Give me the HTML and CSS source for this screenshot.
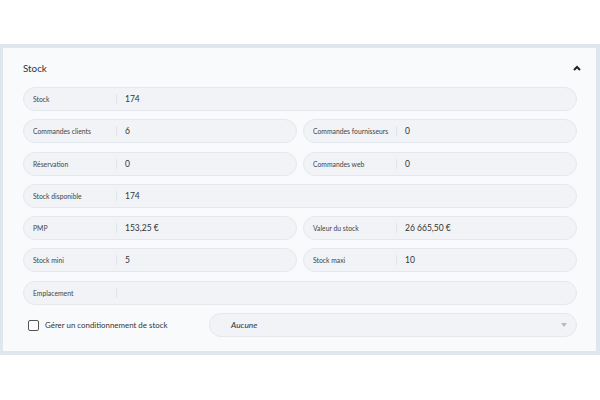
FILE: index.html
```html
<!DOCTYPE html>
<html lang="fr">
<head>
  <meta charset="UTF-8">
  <meta name="viewport" content="width=device-width, initial-scale=1">
  <title>Stock</title>
  <link rel="stylesheet" href="styles.css">
</head>
<body>
  <div class="frame">
    <div class="card">
      <div class="card-header">
        <span class="card-title">Stock</span>
        <svg class="chevron" width="8" height="6" viewBox="0 0 8 6">
          <polyline points="1,5 4,2 7,5" fill="none" stroke="#222" stroke-width="2"/>
        </svg>
      </div>

      <div class="fields">
        <div class="field full"><span class="label">Stock</span><span class="value">174</span></div>

        <div class="field"><span class="label">Commandes clients</span><span class="value">6</span></div>
        <div class="field"><span class="label">Commandes fournisseurs</span><span class="value">0</span></div>

        <div class="field"><span class="label">Réservation</span><span class="value">0</span></div>
        <div class="field"><span class="label">Commandes web</span><span class="value">0</span></div>

        <div class="field full"><span class="label">Stock disponible</span><span class="value">174</span></div>

        <div class="field"><span class="label">PMP</span><span class="value">153,25 €</span></div>
        <div class="field"><span class="label">Valeur du stock</span><span class="value">26 665,50 €</span></div>

        <div class="field"><span class="label">Stock mini</span><span class="value">5</span></div>
        <div class="field"><span class="label">Stock maxi</span><span class="value">10</span></div>

        <div class="field full"><span class="label">Emplacement</span><span class="value"></span></div>

        <div class="options full">
          <label class="check">
            <span class="box"></span>
            Gérer un conditionnement de stock
          </label>
          <div class="select">
            <span>Aucune</span>
            <svg width="6" height="4" viewBox="0 0 6 4"><polygon points="0,0 6,0 3,4" fill="#b4b9c2"/></svg>
          </div>
        </div>
      </div>
    </div>
  </div>
</body>
</html>
```

FILE: styles.css
```css
body {
  margin: 0;
  padding-top: 44px;
  font-family: Lato, "Noto Sans", sans-serif;
  background: #fff;
  color: #333;
}

.frame {
  background: #dfe6ee;
  padding: 4px 4px 4px 3px;
}

.card {
  background: #f9fafc;
  padding: 0 19px 14px 20px;
}

.card-header {
  height: 39px;
  display: flex;
  align-items: center;
  justify-content: space-between;
}

.card-title {
  font-size: 9.8px;
  color: #333;
}

.chevron {
  margin-right: -4px;
}

.fields {
  display: grid;
  grid-template-columns: 1fr 1fr;
  column-gap: 6px;
  row-gap: 8.3px;
}

.full {
  grid-column: 1 / 3;
}

.field {
  height: 24px;
  display: flex;
  align-items: center;
  background: #f1f3f6;
  border: 1px solid #e4e8ed;
  border-radius: 13px;
  box-sizing: border-box;
}

.label {
  width: 83px;
  padding-left: 9px;
  font-size: 6.8px;
  color: #444;
  white-space: nowrap;
  border-right: 1px solid #e0e3e8;
  line-height: 10px;
}

.value {
  padding-left: 8px;
  font-size: 8.5px;
  color: #333;
}

.options {
  height: 24px;
  display: flex;
  align-items: center;
}

.check {
  width: 186px;
  display: flex;
  align-items: center;
  font-size: 7.9px;
  color: #333;
  padding-left: 5px;
  box-sizing: border-box;
}

.box {
  width: 9px;
  height: 9px;
  border: 1.4px solid #555;
  border-radius: 2px;
  margin-right: 6px;
  background: #fff;
}

.select {
  flex: 1;
  height: 24px;
  display: flex;
  align-items: center;
  justify-content: space-between;
  padding: 0 9px 0 21px;
  background: #f1f3f6;
  border: 1px solid #e4e8ed;
  border-radius: 13px;
  box-sizing: border-box;
  font-size: 8.4px;
  font-style: italic;
  color: #333;
}
```
